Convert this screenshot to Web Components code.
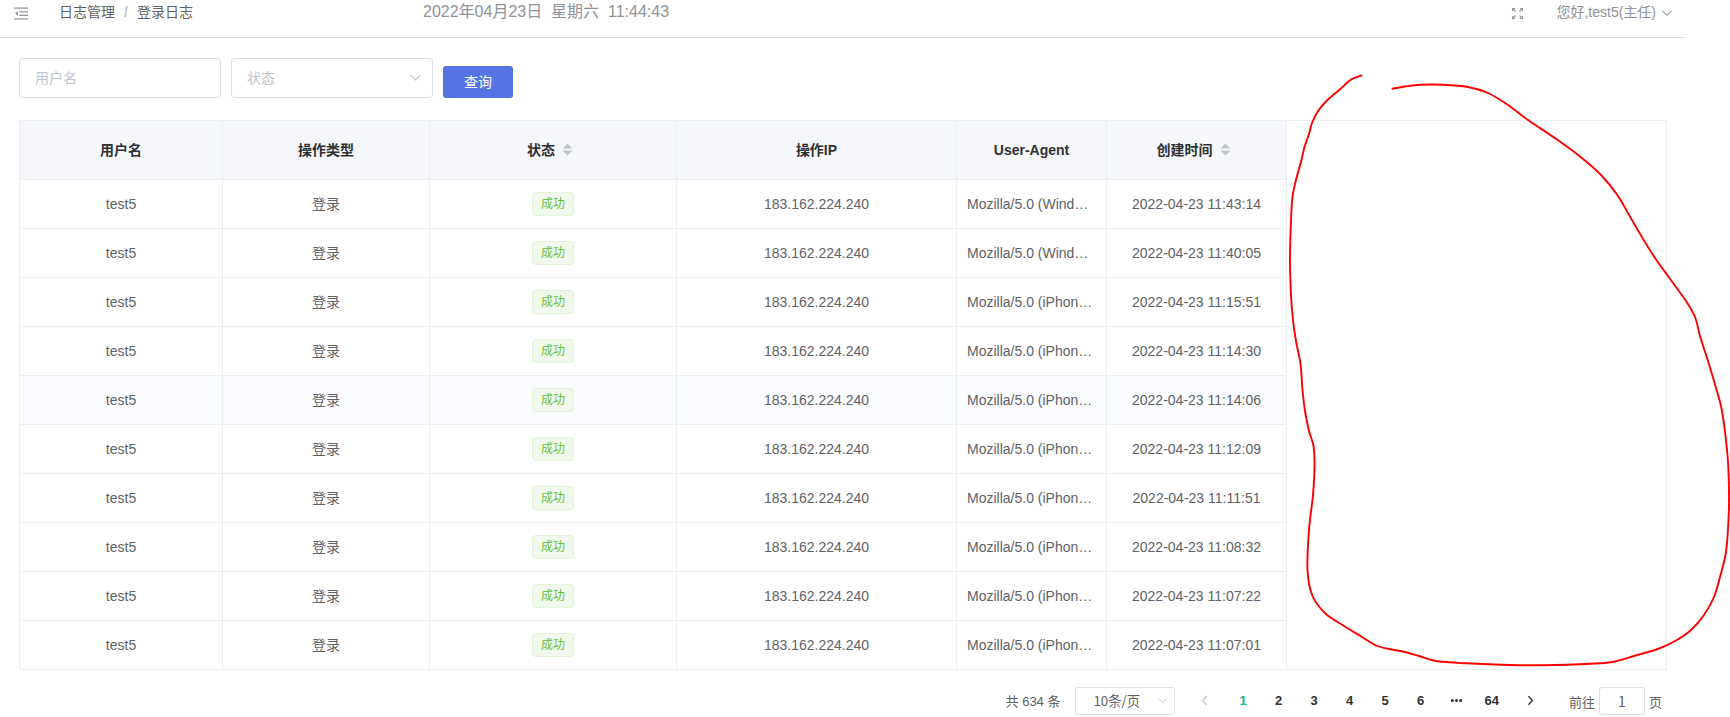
<!DOCTYPE html>
<html lang="zh-CN">
<head>
<meta charset="UTF-8">
<title>登录日志</title>
<style>
  body {
    margin: 0;
    width: 1730px;
    height: 717px;
    overflow: hidden;
    background: #fff;
    color: #606266;
    font-family: "Liberation Sans", "Noto Sans CJK SC", sans-serif;
    font-size: 14px;
  }
</style>
</head>
<body>
<log-page></log-page>

<script>
  class SvgIcon extends HTMLElement {
    constructor() {
      super();
      this.attachShadow({ mode: "open" });
    }

    connectedCallback() {
      const icons = {
        fold: `<path d="M0 1h13M0 11h13" stroke="#b4b7bd" stroke-width="1.5"/><path d="M5 4.500h8M5 7.800h8"/><path d="M3.700 4v4.200L1 6.100z" fill="currentColor" stroke="none"/>`,
        full: `<path d="M1.500 4V1.500H4M1.500 1.500l3 3M11.500 4V1.500H9M11.500 1.500l-3 3M1.500 9v2.500H4M1.500 11.500l3-3M11.500 9v2.500H9M11.500 11.500l-3-3"/>`,
        down: `<path d="M1.500 4.200l5 4.800 5-4.800" stroke-width="1.100"/>`,
        left: `<path d="M8.500 2.300L4.700 6.500l3.800 4.200" stroke-width="1.400"/>`,
        right: `<path d="M4.500 2.300l3.800 4.200-3.800 4.200" stroke-width="1.400"/>`,
        more: `<g fill="currentColor" stroke="none"><circle cx="2.300" cy="6.500" r="1.500"/><circle cx="6.500" cy="6.500" r="1.500"/><circle cx="10.700" cy="6.500" r="1.500"/></g>`,
        sort: `<path d="M1.500 5.500L6.500.5l5 5zM1.500 7.500h10l-5 5z" fill="currentColor" stroke="none"/>`,
      };
      this.shadowRoot.innerHTML = `
        <style>
          :host { display: inline-block; width: 13px; height: 13px; flex: none; }
          svg { display: block; width: 100%; height: 100%; }
        </style>
        <svg viewBox="0 0 13 13" fill="none" stroke="currentColor" stroke-width="1.1">${icons[this.getAttribute("name")]}</svg>
      `;
    }
  }

  class PageHeader extends HTMLElement {
    constructor() {
      super();
      this.attachShadow({ mode: "open" });
      this.shadowRoot.innerHTML = `
        <style>
          :host {
            display: flex;
            box-sizing: border-box;
            width: 1686px;
            height: 38px;
            padding: 0 13px 0 14px;
            border-bottom: 1px solid #dcdfe6;
            color: #909399;
          }
          .crumbs { display: flex; width: 363px; margin-left: 31px; line-height: 24px; color: #606266; }
          .crumbs i { margin: 0 9px; color: #c0c4cc; font-style: normal; font-weight: bold; }
          .fold { width: 14px; height: 14px; margin-top: 7px; }
          .time { margin-left: 1px; font-size: 16px; line-height: 23px; white-space: pre; }
          .right { display: flex; margin-left: auto; line-height: 24px; }
          .full { margin: 7px 32px 0 0; }
          .down { width: 12px; height: 12px; margin: 7px 0 0 5px; }
        </style>
        <svg-icon class="fold" name="fold"></svg-icon>
        <div class="crumbs"><span>日志管理</span><i>/</i><span>登录日志</span></div>
        <div class="time">2022年04月23日  星期六  11:44:43</div>
        <div class="right">
          <svg-icon class="full" name="full"></svg-icon>
          <span>您好,test5(主任)</span>
          <svg-icon class="down" name="down"></svg-icon>
        </div>
      `;
    }
  }

  class SearchBar extends HTMLElement {
    constructor() {
      super();
      this.attachShadow({ mode: "open" });
      this.shadowRoot.innerHTML = `
        <style>
          :host { display: flex; align-items: flex-end; gap: 10px; padding: 20px 19px 22px; }
          .input {
            display: flex;
            box-sizing: border-box;
            align-items: center;
            justify-content: space-between;
            width: 202px;
            height: 40px;
            padding: 0 10px 2px 15px;
            border: 1px solid #dcdfe6;
            border-radius: 4px;
            color: #c0c4cc;
          }
          button {
            width: 70px;
            height: 32px;
            padding: 0 0 2px;
            border: 0;
            border-radius: 3px;
            background: #5674e3;
            color: #fff;
            font: inherit;
          }
        </style>
        <div class="input">用户名</div>
        <div class="input">状态<svg-icon name="down"></svg-icon></div>
        <button>查询</button>
      `;
    }
  }

  class StatusTag extends HTMLElement {
    constructor() {
      super();
      this.attachShadow({ mode: "open" });
      this.shadowRoot.innerHTML = `
        <style>
          :host {
            display: inline-block;
            box-sizing: border-box;
            height: 24px;
            padding: 0 8px;
            border: 1px solid #e1f3d8;
            border-radius: 4px;
            background: #f0f9eb;
            color: #67c23a;
            font-size: 12px;
            line-height: 22px;
          }
        </style>
        <slot></slot>
      `;
    }
  }

  class LogTable extends HTMLElement {
    constructor() {
      super();
      this.attachShadow({ mode: "open" });
    }

    set data(rows) {
      const renderRow = (row, i) => `
        <div class="row ${i === 4 ? "hover" : ""}">
          <div>test5</div>
          <div class="cjk">登录</div>
          <div><status-tag>成功</status-tag></div>
          <div>183.162.224.240</div>
          <div class="agent">Mozilla/5.0 (${row.agent}…</div>
          <div>2022-04-23 ${row.time}</div>
        </div>
      `;

      this.shadowRoot.innerHTML = `
        <style>
          :host {
            display: block;
            box-sizing: border-box;
            width: 1648px;
            height: 550px;
            margin-left: 19px;
            border: 1px solid #ebeef5;
          }
          .row {
            display: grid;
            grid-template-columns: 203px 207px 247px 280px 150px 180px;
            width: 1267px;
            height: 49px;
          }
          .row > div {
            display: flex;
            align-items: center;
            justify-content: center;
            border-right: 1px solid #ebeef5;
            border-bottom: 1px solid #ebeef5;
            white-space: nowrap;
          }
          .row > .agent { justify-content: flex-start; padding-left: 10px; }
          .row > .cjk { padding-bottom: 2px; }
          .row > .sortable { padding: 0 5px 2px 0; }
          .head { height: 59px; background: #f5f7fa; color: #303133; font-weight: bold; }
          .hover { background: #fafcff; }
          svg-icon { margin-left: 6px; color: #c0c4cc; }
        </style>
        <div class="row head">
          <div class="cjk">用户名</div>
          <div class="cjk">操作类型</div>
          <div class="sortable">状态<svg-icon name="sort"></svg-icon></div>
          <div class="cjk">操作IP</div>
          <div>User-Agent</div>
          <div class="sortable">创建时间<svg-icon name="sort"></svg-icon></div>
        </div>
        ${rows.map(renderRow).join("")}
      `;
    }
  }

  class PageNav extends HTMLElement {
    constructor() {
      super();
      this.attachShadow({ mode: "open" });
      const pages = [1, 2, 3, 4, 5, 6, "more", 64];
      this.shadowRoot.innerHTML = `
        <style>
          :host {
            display: flex;
            align-items: center;
            justify-content: flex-end;
            width: 1662px;
            height: 28px;
            padding-top: 17px;
            font-size: 13px;
          }
          .size, .jump {
            display: flex;
            box-sizing: border-box;
            align-items: center;
            height: 28px;
            border: 1px solid #dcdfe6;
            border-radius: 3px;
            font-family: "Noto Sans CJK SC", sans-serif;
          }
          .size { width: 100px; margin: 0 11px 0 15px; padding: 0 6px 1px 17px; justify-content: space-between; font-size: 13.3px; }
          .size svg-icon { width: 11px; height: 11px; color: #c0c4cc; }
          .jump { width: 46px; margin: 0 4px; justify-content: center; font-size: 14px; }
          .page {
            display: flex;
            width: 35.5px;
            padding-bottom: 2px;
            justify-content: center;
            color: #303133;
            font-weight: bold;
          }
          .total { padding-bottom: 2px; }
          .current { color: #1ab394; }
          .prev { margin-right: 3.5px; color: #c0c4cc; }
          .next { margin: 0 21px 0 3px; }
        </style>
        <span class="total">共 634 条</span>
        <div class="size">10条/页<svg-icon name="down"></svg-icon></div>
        <div class="page prev"><svg-icon name="left"></svg-icon></div>
        ${pages.map(p => `<div class="page ${p === 1 ? "current" : ""}">${p === "more" ? `<svg-icon name="more"></svg-icon>` : p}</div>`).join("")}
        <div class="page next"><svg-icon name="right"></svg-icon></div>
        <span>前往</span>
        <div class="jump">1</div>
        <span>页</span>
      `;
    }
  }

  // hand-drawn marker over the empty part of the table
  class RedMarker extends HTMLElement {
    constructor() {
      super();
      this.attachShadow({ mode: "open" });
      const points = [
        [1361.5, 75.5], [1351, 79.5], [1341, 88.5], [1328, 99.5], [1318, 111], [1312, 123], [1309, 134], [1304.5, 147],
        [1301.5, 160], [1296, 180], [1292.5, 197], [1291, 220], [1290, 260], [1291, 295], [1293, 320], [1296, 341],
        [1300.5, 364], [1302.5, 390], [1305, 411], [1309, 431], [1313.5, 446], [1314.5, 467], [1313, 495], [1309, 530],
        [1307.5, 570], [1312.5, 596], [1325.5, 613.5], [1344, 626], [1362, 637], [1376, 645.5], [1389, 649],
        [1404, 651.7], [1419, 656], [1436, 661], [1466, 663.3], [1510, 665], [1555, 665], [1600, 663.3], [1617, 661],
        [1637, 655], [1658, 649], [1676, 640.5], [1691, 630], [1704, 615], [1714, 597], [1720, 577],
        [1726, 552], [1728.5, 520], [1729, 490], [1727.5, 455], [1722, 411], [1716, 388], [1708, 361],
        [1700, 336], [1695, 317], [1685, 299.5], [1655, 258], [1636, 227], [1617, 194.5], [1600, 174],
        [1580, 156.5], [1557, 139.5], [1528, 120], [1508, 105], [1488, 93], [1468, 87], [1443, 84.8], [1420, 84.8],
        [1405, 86.5], [1392.5, 88.7],
      ];
      this.shadowRoot.innerHTML = `
        <style>
          :host { display: block; position: absolute; top: 0; left: 0; width: 1730px; height: 717px; pointer-events: none; }
        </style>
        <svg width="1730" height="717" fill="none" stroke="#f00" stroke-width="1.9" stroke-linecap="round" stroke-linejoin="round">
          <path d="${this.smooth(points)}"/>
        </svg>
      `;
    }

    // Catmull-Rom spline as cubic segments
    smooth(pts) {
      let d = `M${pts[0]}`;
      for (let i = 0; i < pts.length - 1; i++) {
        const [a, b, c, e] = [pts[i - 1] || pts[i], pts[i], pts[i + 1], pts[i + 2] || pts[i + 1]];
        d += `C${b[0] + (c[0] - a[0]) / 6} ${b[1] + (c[1] - a[1]) / 6} ${c[0] - (e[0] - b[0]) / 6} ${c[1] - (e[1] - b[1]) / 6} ${c[0]} ${c[1]}`;
      }
      return d;
    }
  }

  class LogPage extends HTMLElement {
    constructor() {
      super();
      this.attachShadow({ mode: "open" });
      this.shadowRoot.innerHTML = `
        <style>
          :host { display: flex; flex-direction: column; }
        </style>
        <page-header></page-header>
        <search-bar></search-bar>
        <log-table></log-table>
        <page-nav></page-nav>
        <red-marker></red-marker>
      `;
    }

    connectedCallback() {
      const times = ["11:43:14", "11:40:05", "11:15:51", "11:14:30", "11:14:06", "11:12:09", "11:11:51", "11:08:32", "11:07:22", "11:07:01"];
      this.shadowRoot.querySelector("log-table").data = times.map((time, i) => ({
        time,
        agent: i < 2 ? "Wind" : "iPhon",
      }));
    }
  }

  customElements.define("svg-icon", SvgIcon);
  customElements.define("page-header", PageHeader);
  customElements.define("search-bar", SearchBar);
  customElements.define("status-tag", StatusTag);
  customElements.define("log-table", LogTable);
  customElements.define("page-nav", PageNav);
  customElements.define("red-marker", RedMarker);
  customElements.define("log-page", LogPage);
</script>
</body>
</html>
